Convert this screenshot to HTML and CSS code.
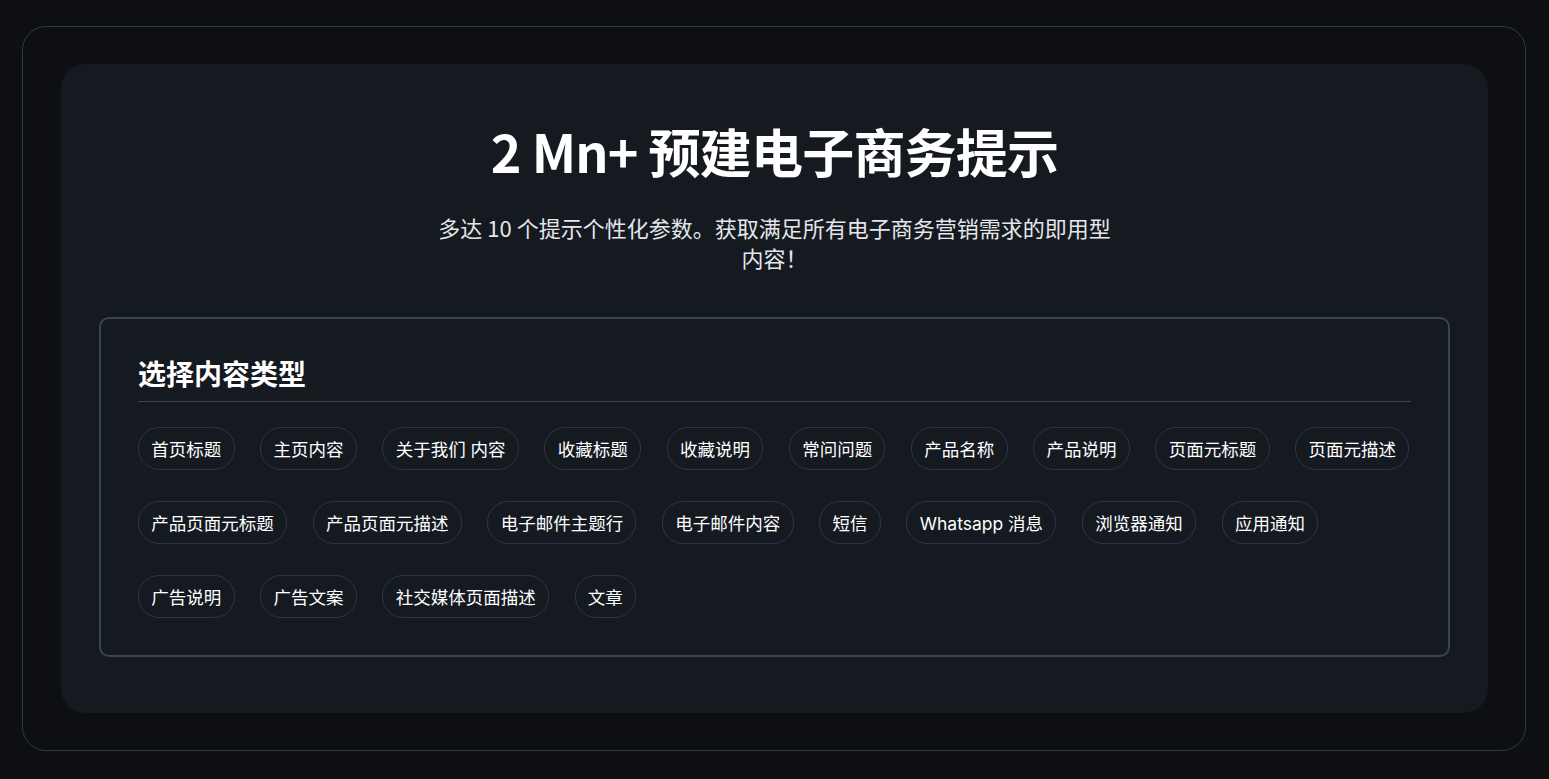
FILE: index.html
```html
<!DOCTYPE html>
<html lang="zh-CN">
<head>
    <meta charset="UTF-8">
    <meta name="viewport" content="width=device-width, initial-scale=1.0">
    <title>电子商务提示</title>
    <link rel="stylesheet" href="styles.css">
</head>
<body>
    <div class="frame">
        <div class="card">
            <h1>2 Mn+ 预建电子商务提示</h1>
            <p class="subtitle">多达 10 个提示个性化参数。获取满足所有电子商务营销需求的即用型内容！</p>

            <div class="picker">
                <h2>选择内容类型</h2>
                <div class="chips">
                    <button class="chip">首页标题</button>
                    <button class="chip">主页内容</button>
                    <button class="chip">关于我们 内容</button>
                    <button class="chip">收藏标题</button>
                    <button class="chip">收藏说明</button>
                    <button class="chip">常问问题</button>
                    <button class="chip">产品名称</button>
                    <button class="chip">产品说明</button>
                    <button class="chip">页面元标题</button>
                    <button class="chip">页面元描述</button>
                    <button class="chip">产品页面元标题</button>
                    <button class="chip">产品页面元描述</button>
                    <button class="chip">电子邮件主题行</button>
                    <button class="chip">电子邮件内容</button>
                    <button class="chip">短信</button>
                    <button class="chip">Whatsapp 消息</button>
                    <button class="chip">浏览器通知</button>
                    <button class="chip">应用通知</button>
                    <button class="chip">广告说明</button>
                    <button class="chip">广告文案</button>
                    <button class="chip">社交媒体页面描述</button>
                    <button class="chip">文章</button>
                </div>
            </div>
        </div>
    </div>
</body>
</html>
```

FILE: styles.css
```css
body {
    font-family: Inter, "Noto Sans CJK SC", sans-serif;
    background-color: #0d0f12;
    color: #ffffff;
    margin: 26px 23px 28px 22px;
}
.frame {
    border: 1px solid #2f3a4e;
    border-radius: 24px;
    padding: 37px 37px 37px 38px;
}
.card {
    background: #151920;
    border-radius: 24px;
    padding: 53px 38px 56px 38px;
    text-align: center;
}
h1 {
    font-family: "Noto Sans CJK SC", sans-serif;
    font-size: 52px;
    font-weight: bold;
    letter-spacing: -0.8px;
    line-height: 1.3;
    margin: 0 0 27px 0;
}
p.subtitle {
    font-family: "Noto Sans CJK SC", sans-serif;
    color: #e4e6ea;
    font-size: 22px;
    line-height: 30px;
    max-width: 684px;
    margin: 0 auto 45px auto;
}
.picker {
    border: 2px solid #3a4455;
    border-radius: 10px;
    padding: 33px 37px 37px 37px;
    text-align: left;
}
h2 {
    font-family: "Noto Sans CJK SC", sans-serif;
    font-size: 28px;
    font-weight: bold;
    line-height: 42px;
    margin: 0;
    padding-bottom: 7px;
    border-bottom: 1px solid #3a4455;
}
.chips {
    display: flex;
    flex-wrap: wrap;
    gap: 31px 25.6px;
    margin-top: 25px;
}
.chip {
    font-family: Inter, "Noto Sans CJK SC", sans-serif;
    font-size: 17.5px;
    color: #ffffff;
    background: transparent;
    border: 1px solid #2e3644;
    border-radius: 21px;
    height: 43px;
    padding: 0 12.3px;
    cursor: pointer;
}
.chip:hover {
    border-color: #4a5568;
}
```
